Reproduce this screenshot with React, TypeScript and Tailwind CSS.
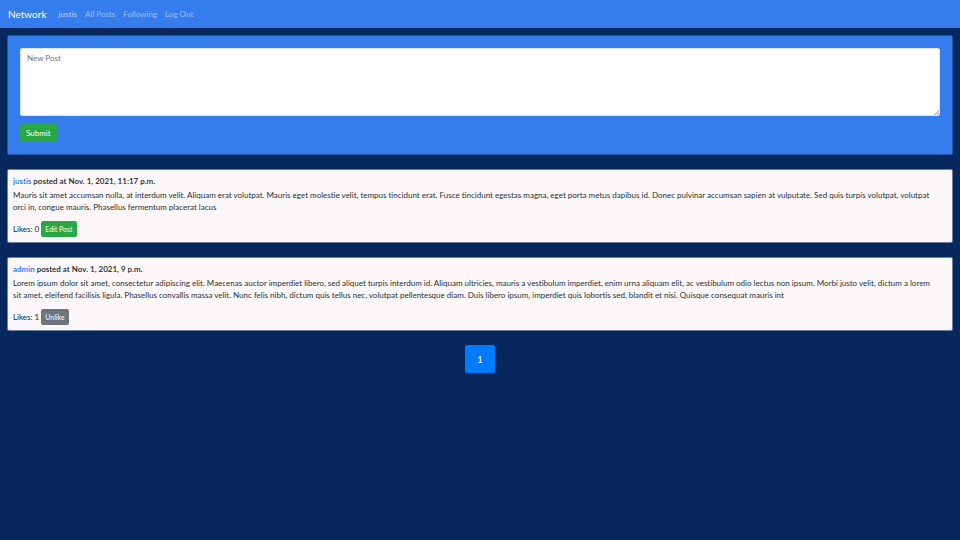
interface Post {
  author: string;
  date: string;
  body: string;
  likes: number;
  own: boolean;
}

const posts: Post[] = [
  {
    author: "justis",
    date: "Nov. 1, 2021, 11:17 p.m.",
    body: "Mauris sit amet accumsan nulla, at interdum velit. Aliquam erat volutpat. Mauris eget molestie velit, tempus tincidunt erat. Fusce tincidunt egestas magna, eget porta metus dapibus id. Donec pulvinar accumsan sapien at vulputate. Sed quis turpis volutpat, volutpat orci in, congue mauris. Phasellus fermentum placerat lacus",
    likes: 0,
    own: true,
  },
  {
    author: "admin",
    date: "Nov. 1, 2021, 9 p.m.",
    body: "Lorem ipsum dolor sit amet, consectetur adipiscing elit. Maecenas auctor imperdiet libero, sed aliquet turpis interdum id. Aliquam ultricies, mauris a vestibulum imperdiet, enim urna aliquam elit, ac vestibulum odio lectus non ipsum. Morbi justo velit, dictum a lorem sit amet, eleifend facilisis ligula. Phasellus convallis massa velit. Nunc felis nibh, dictum quis tellus nec, volutpat pellentesque diam. Duis libero ipsum, imperdiet quis lobortis sed, blandit et nisi. Quisque consequat mauris int",
    likes: 1,
    own: false,
  },
];

function NavBar() {
  return (
    <nav className="flex h-7 items-center bg-[#357ded] px-2 text-white/50">
      <a href="#home" className="mr-3 text-[10px] text-white">Network</a>
      <div className="flex gap-2">
        <a href="#profile" className="font-bold">justis</a>
        <a href="#all">All Posts</a>
        <a href="#following">Following</a>
        <a href="#logout">Log Out</a>
      </div>
    </nav>
  );
}

function NewPost() {
  return (
    <form
      className="rounded-xs border border-[#1f53a6] bg-[#357ded] p-3"
      onSubmit={(e) => e.preventDefault()}
    >
      <div className="relative">
        <textarea
          aria-label="New Post"
          placeholder="New Post"
          className="block h-[68px] w-full resize-none rounded-xs border border-[#dce3ee] bg-white px-[6px] py-[3px] leading-3 text-[#495057] placeholder:text-[#6c757d]"
        />
        <svg
          aria-hidden="true"
          viewBox="0 0 5 5"
          className="pointer-events-none absolute right-px bottom-px h-[5px] w-[5px]"
          fill="none"
          stroke="#555"
          strokeWidth="0.7"
        >
          <path d="M0.5 5 5 0.5M3 5 5 3" />
        </svg>
      </div>
      <button type="submit" className="mt-2 block h-[18px] rounded-xs bg-[#28a745] px-[6px] text-white">
        Submit
      </button>
    </form>
  );
}

function PostCard({ post }: { post: Post }) {
  return (
    <article className="rounded-xs border border-[#6c7ea3] bg-[#fcf7f8] p-[5px] leading-3">
      <h2 className="font-semibold text-[#212529]">
        <a href="#profile" className="text-[#1a78f5]">{post.author}</a> posted at {post.date}
      </h2>
      <p className="mt-[2px] pr-3 text-[#2b3035]">{post.body}</p>
      <div className="mt-2 flex items-center gap-[2px] text-[#212529]">
        <span>Likes: {post.likes}</span>
        <button
          type="button"
          className={
            post.own
              ? "h-4 rounded-xs bg-[#28a745] px-1 text-[7px] text-white"
              : "h-4 rounded-xs bg-[#6c757d] px-1 text-[7px] text-white"
          }
        >
          {post.own ? "Edit Post" : "Unlike"}
        </button>
      </div>
    </article>
  );
}

export default function App() {
  return (
    <div className="min-h-screen bg-[#07285c] font-[Lato,'Noto_Sans',sans-serif] text-[8px] [font-variant-ligatures:none]">
      <NavBar />
      <main className="flex flex-col gap-[14px] px-[7px] pt-[7px]">
        <NewPost />
        {posts.map((post) => (
          <PostCard key={post.author} post={post} />
        ))}
        <nav aria-label="Pagination" className="flex justify-center">
          <a
            href="#page-1"
            className="flex h-7 w-[30px] items-center justify-center rounded-xs bg-[#007bff] text-[10px] text-white"
          >
            1
          </a>
        </nav>
      </main>
    </div>
  );
}
